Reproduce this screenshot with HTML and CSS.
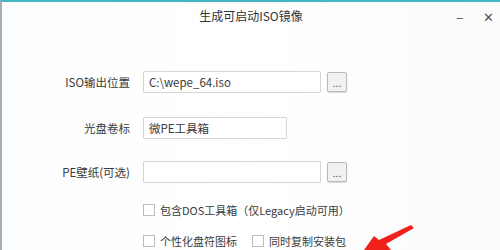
FILE: index.html
```html
<!DOCTYPE html>
<html lang="zh-CN">

<head>
    <meta charset="UTF-8">
    <title>生成可启动ISO镜像</title>
    <link rel="stylesheet" href="styles.css">
</head>

<body>
    <div class="window">
        <div class="titlebar">
            <span class="title">生成可启动ISO镜像</span>
            <span class="win-btn min">&#8211;</span>
            <span class="win-btn close">&#10005;</span>
        </div>

        <div class="form">
            <div class="row row1">
                <div class="label">ISO输出位置</div>
                <div class="input wide">C:\wepe_64.iso</div>
                <div class="browse">...</div>
            </div>

            <div class="row row2">
                <div class="label">光盘卷标</div>
                <div class="input short">微PE工具箱</div>
            </div>

            <div class="row row3">
                <div class="label">PE壁纸(可选)</div>
                <div class="input wide"></div>
                <div class="browse">...</div>
            </div>

            <div class="check-row check1">
                <span class="box"></span>
                <span class="check-text">包含DOS工具箱（仅Legacy启动可用）</span>
            </div>

            <div class="check-row check2">
                <span class="box"></span>
                <span class="check-text">个性化盘符图标</span>
                <span class="box second"></span>
                <span class="check-text">同时复制安装包</span>
            </div>
        </div>

        <svg class="arrow" width="500" height="250" viewBox="0 0 500 250">
            <polygon points="411,225 414,228 386,244 391,250 364,250 374,236 379,240" fill="#f0201a" />
        </svg>
    </div>
</body>

</html>
```

FILE: styles.css
```css
body {
    margin: 0;
    background-color: #fcfdfe;
    font-family: "Noto Sans CJK SC", "Noto Sans", sans-serif;
    color: #3a3a3a;
    font-size: 11.5px;
}

.window {
    position: relative;
    width: 500px;
    height: 250px;
    box-sizing: border-box;
    border-top: 2px solid #45b6c8;
    border-left: 2px solid #a9adb3;
    background: linear-gradient(90deg, #fcfdfe 0%, #ffffff 50%, #f9fbfc 100%);
    overflow: hidden;
}

.titlebar {
    display: flex;
    align-items: center;
    height: 27px;
    position: relative;
}

.title {
    flex: 1;
    text-align: center;
    font-size: 12px;
    color: #333;
}

.win-btn {
    position: absolute;
    top: 4px;
    font-size: 14px;
    color: #555;
}

.min {
    left: 454px;
}

.close {
    left: 481px;
    font-size: 13px;
    top: 5px;
}

.form {
    padding-top: 42px;
}

.row {
    display: flex;
    align-items: center;
    height: 22px;
}

.label {
    width: 128px;
    text-align: right;
    margin-right: 13px;
}

.input {
    height: 22px;
    box-sizing: border-box;
    border: 1px solid #d6d6d6;
    background-color: #fff;
    padding-left: 5px;
    line-height: 20px;
    border-radius: 1px;
}

.wide {
    width: 178px;
}

.short {
    width: 144px;
}

.browse {
    width: 20px;
    height: 20px;
    box-sizing: border-box;
    margin-left: 6px;
    border: 1px solid #b9b9b9;
    border-radius: 2px;
    background-color: #f1f1f1;
    font-size: 10px;
    line-height: 20px;
    text-align: center;
    color: #444;
    box-shadow: 0 1px 1px #d8d8d8;
}

.row2 {
    margin-top: 24px;
}

.row3 {
    margin-top: 22px;
}

.check-row {
    display: flex;
    align-items: center;
    height: 16px;
    padding-left: 141px;
    font-size: 11px;
}

.check1 {
    margin-top: 19px;
}

.check2 {
    margin-top: 15px;
}

.box {
    width: 12px;
    height: 12px;
    box-sizing: border-box;
    border: 1px solid #bdbdbd;
    background-color: #fff;
    margin-right: 5px;
}

.box.second {
    margin-left: 15px;
}

.check-text {
    white-space: nowrap;
}

.arrow {
    position: absolute;
    left: -2px;
    top: -2px;
}
```
